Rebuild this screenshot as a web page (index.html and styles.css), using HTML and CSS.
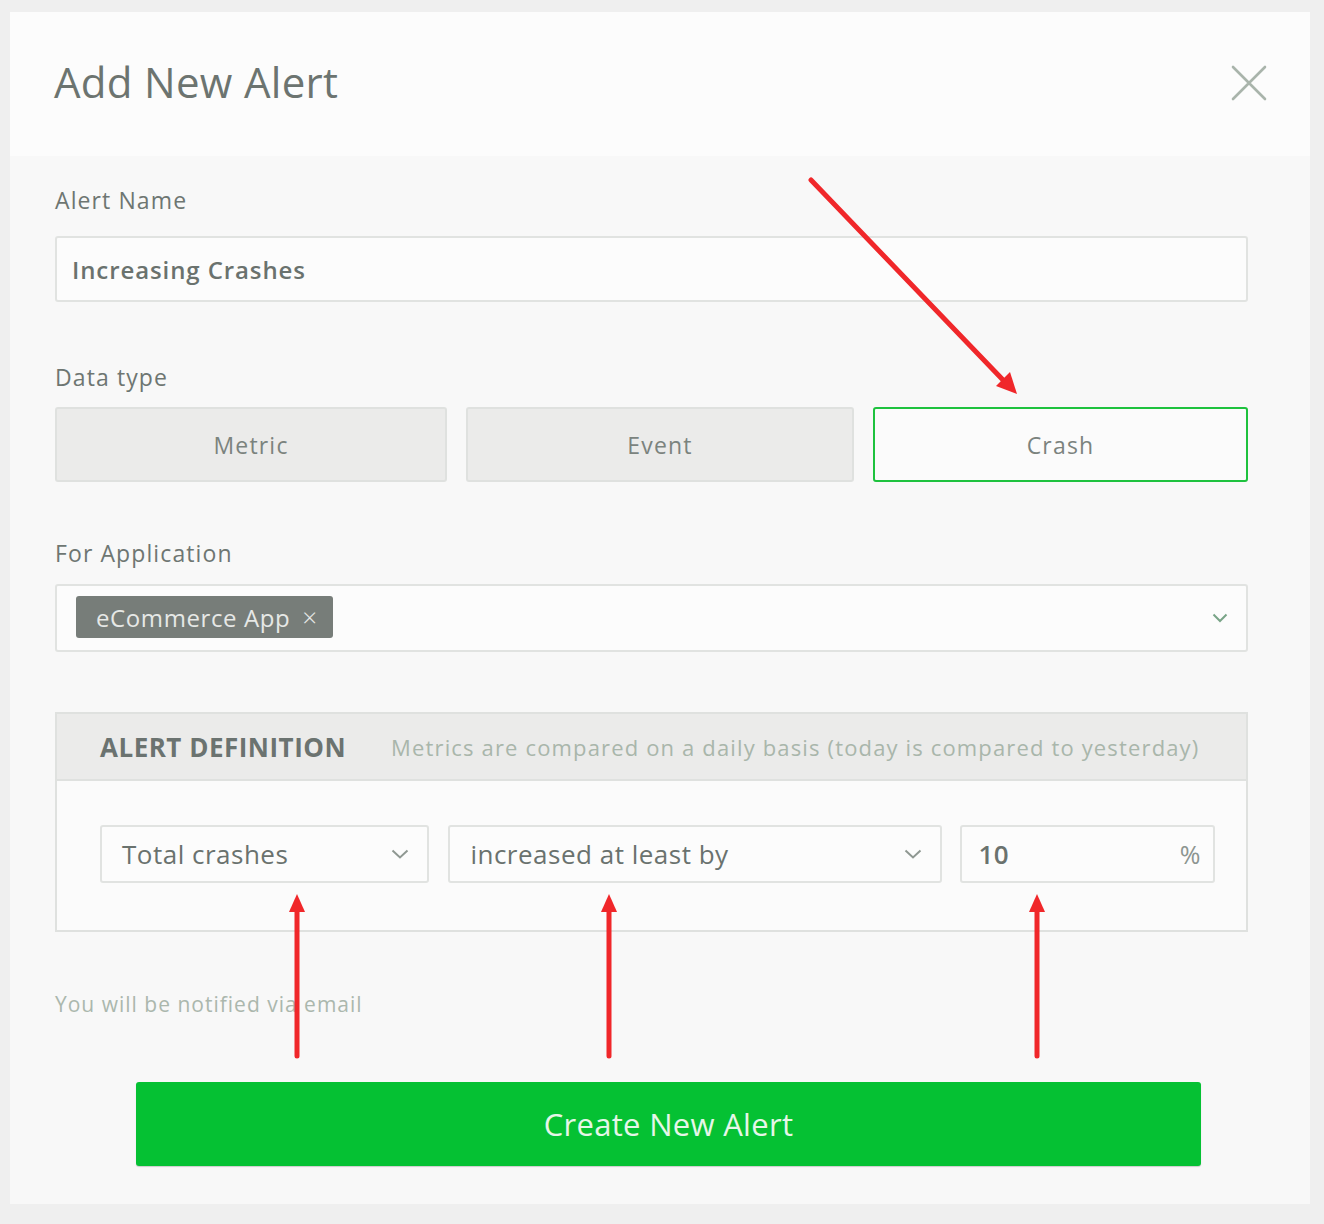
FILE: index.html
```html
<!DOCTYPE html>
<html lang="en">
<head>
<meta charset="utf-8">
<title>Add New Alert</title>
<link rel="stylesheet" href="styles.css">
</head>
<body>
<div class="page">
  <div class="modal">
    <div class="modal-header">
      <h1 class="title">Add New Alert</h1>
      <svg class="close" width="36" height="36" viewBox="0 0 36 36"><path d="M2 2 L34 34 M34 2 L2 34" stroke="#a9b4ab" stroke-width="2.6" stroke-linecap="round" fill="none"/></svg>
    </div>
    <div class="modal-body">
      <div class="label label-name">Alert Name</div>
      <div class="text-input">Increasing Crashes</div>

      <div class="label label-type">Data type</div>
      <div class="type-row">
        <div class="type-btn">Metric</div>
        <div class="type-btn">Event</div>
        <div class="type-btn active">Crash</div>
      </div>

      <div class="label label-app">For Application</div>
      <div class="multi-select">
        <span class="tag">eCommerce App <span class="tag-x">×</span></span>
        <svg class="chev chev-green" width="16" height="10" viewBox="0 0 16 10"><path d="M1.5 1.5 L8 8 L14.5 1.5" stroke="#79a487" stroke-width="2" fill="none"/></svg>
      </div>

      <div class="definition">
        <div class="def-head">
          <span class="def-title">ALERT DEFINITION</span>
          <span class="def-desc">Metrics are compared on a daily basis (today is compared to yesterday)</span>
        </div>
        <div class="def-body">
          <div class="field f-metric"><span>Total crashes</span><svg class="chev" width="18" height="10" viewBox="0 0 18 10"><path d="M1.5 1.5 L9 8.5 L16.5 1.5" stroke="#8f9892" stroke-width="2" fill="none"/></svg></div>
          <div class="field f-cond"><span>increased at least by</span><svg class="chev" width="18" height="10" viewBox="0 0 18 10"><path d="M1.5 1.5 L9 8.5 L16.5 1.5" stroke="#8f9892" stroke-width="2" fill="none"/></svg></div>
          <div class="field f-value"><span class="val">10</span><span class="pct">%</span></div>
        </div>
      </div>

      <div class="notify">You will be notified via email</div>

      <div class="create-btn">Create New Alert</div>
    </div>
  </div>

  <svg class="annotations" width="1324" height="1224" viewBox="0 0 1324 1224">
    <g stroke="#f0272a" stroke-width="5" stroke-linecap="round" fill="none">
      <path d="M811 180 L1004 381"/>
      <path d="M297 1056 L297 910"/>
      <path d="M609 1056 L609 910"/>
      <path d="M1037 1056 L1037 910"/>
    </g>
    <g fill="#f0272a">
      <polygon points="1017,394 996,386 1010,372"/>
      <polygon points="297,894 289,912 305,912"/>
      <polygon points="609,894 601,912 617,912"/>
      <polygon points="1037,894 1029,912 1045,912"/>
    </g>
  </svg>
</div>
</body>
</html>
```

FILE: styles.css
```css
* { box-sizing: border-box; }
html, body { margin: 0; padding: 0; }
body {
  background: #efefef;
  font-family: "Open Sans", "Noto Sans", sans-serif;
  color: #6e7672;
}
.page {
  position: relative;
  width: 1324px;
  height: 1224px;
  padding: 12px 14px 20px 10px;
}
.modal {
  width: 1300px;
  background: #f8f8f8;
  height: 1192px;
}
.modal-header {
  height: 144px;
  background: #fcfcfc;
  display: flex;
  align-items: center;
  justify-content: space-between;
  padding: 0 43px 0 44px;
}
.title {
  margin: 0;
  font-size: 42px;
  font-weight: 400;
  color: #6c7470;
  letter-spacing: 0.3px;
  transform: translateY(-3px);
}
.close { display: block; margin-top: -2px; }

.modal-body {
  padding: 0 62px 0 45px;
}
.label {
  font-size: 23px;
  line-height: 28px;
  letter-spacing: 1.1px;
  color: #6e7672;
}
.label-name { padding-top: 30px; margin-bottom: 22px; }
.label-type { margin-top: 61px; margin-bottom: 16px; }
.label-app { margin-top: 57px; margin-bottom: 17px; }

.text-input {
  height: 66px;
  border: 2px solid #e1e3e1;
  border-radius: 3px;
  background: #fcfcfc;
  display: flex;
  align-items: center;
  padding-left: 15px;
  font-size: 24px;
  letter-spacing: 0.9px;
  font-weight: 600;
  color: #6a726e;
}

.type-row {
  display: grid;
  grid-template-columns: 392fr 388fr 375fr;
  column-gap: 19px;
}
.type-btn {
  height: 75px;
  border: 2px solid #dfe1df;
  border-radius: 3px;
  background: #ebebea;
  display: flex;
  align-items: center;
  justify-content: center;
  font-size: 23px;
  letter-spacing: 1.2px;
  color: #7b837e;
}
.type-btn.active {
  background: #fbfbfb;
  border: 2px solid #1ec23e;
}

.multi-select {
  height: 68px;
  border: 2px solid #e1e3e1;
  border-radius: 3px;
  background: #fcfcfc;
  display: flex;
  align-items: center;
  justify-content: space-between;
  padding: 0 18px 0 19px;
}
.tag {
  height: 42px;
  width: 257px;
  background: #777d79;
  border-radius: 3px;
  color: #e6e8e6;
  font-size: 24px;
  letter-spacing: 0.6px;
  display: flex;
  align-items: center;
  padding-left: 20px;
  margin-top: -2px;
}
.tag-x {
  margin-left: 12px;
  font-size: 26px;
  font-weight: 300;
}
.chev { display: block; }

.definition {
  margin-top: 60px;
  border: 2px solid #dfe1df;
  background: #fbfbfb;
}
.def-head {
  height: 67px;
  background: #ebebea;
  border-bottom: 2px solid #dfe1df;
  display: flex;
  align-items: center;
  padding-left: 43px;
}
.def-title {
  font-size: 26px;
  font-weight: 700;
  letter-spacing: 0.5px;
  color: #6b7370;
}
.def-desc {
  margin-left: 45px;
  font-size: 22px;
  letter-spacing: 1.15px;
  color: #a9b6ab;
}
.def-body {
  display: flex;
  padding: 44px 31px 47px 43px;
  gap: 19px;
}
.field {
  height: 58px;
  border: 2px solid #e1e3e1;
  border-radius: 3px;
  background: #fcfcfc;
  display: flex;
  align-items: center;
  justify-content: space-between;
  font-size: 26px;
  letter-spacing: 0.5px;
  color: #6a726e;
}
.f-metric { width: 330px; padding: 0 18px 0 20px; }
.f-cond { width: 495px; padding: 0 18px 0 20px; }
.f-value { width: 255px; padding: 0 12px 0 16px; margin-left: -1px; }
.val { font-weight: 600; }
.pct { color: #8c9590; font-size: 25px; }

.notify {
  margin-top: 58px;
  font-size: 21px;
  line-height: 28px;
  letter-spacing: 1px;
  color: #abb7ad;
}
.create-btn {
  margin-top: 64px;
  margin-left: 81px;
  width: 1065px;
  height: 84px;
  background: #05c133;
  border-radius: 3px;
  box-shadow: 0 1px 1px rgba(0,0,0,0.18);
  display: flex;
  align-items: center;
  justify-content: center;
  font-size: 31px;
  color: #e6f6e8;
  letter-spacing: 0.3px;
}

.annotations {
  position: absolute;
  top: 0;
  left: 0;
  pointer-events: none;
}
```
